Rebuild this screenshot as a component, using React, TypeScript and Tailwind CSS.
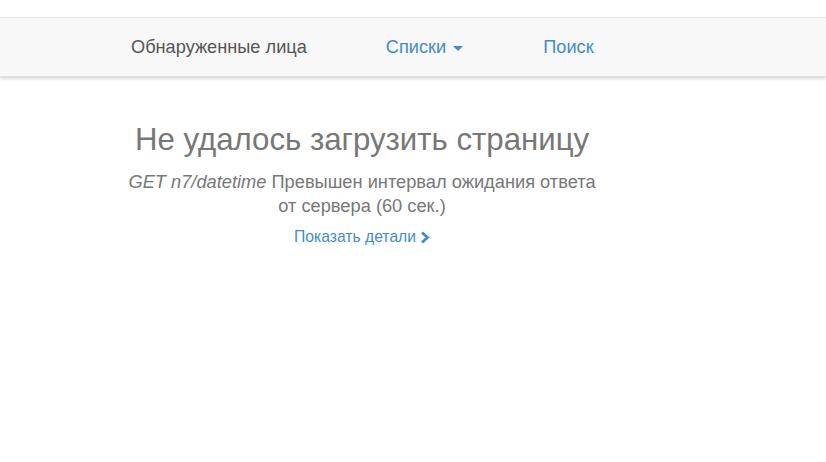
import React from "react";

export default function App() {
  return (
    <div className="min-h-[462px] bg-white" style={{ fontFamily: '"Liberation Sans", Arial, sans-serif' }}>
      <div className="h-[17px]" />
      <nav className="h-[60px] border-t border-[#e7e7e7] bg-[#f8f8f8] shadow-[0_2px_3px_rgba(0,0,0,0.15)] border-b border-b-[#e0e0e0]">
        <div className="flex h-full items-center pl-[131px] pt-[1px] text-[18.2px]">
          <span className="text-[#555]">Обнаруженные лица</span>
          <span className="ml-[79px] flex items-center text-[#428bca]">
            Списки
            <span className="ml-[7px] mt-[2px] h-0 w-0 border-x-[5px] border-t-[5px] border-x-transparent border-t-[#428bca]" />
          </span>
          <span className="ml-[80px] text-[#428bca]">Поиск</span>
        </div>
      </nav>
      <div className="w-[480px] ml-[122px] text-center text-[#777]">
        <h2 className="mt-[43px] text-[31.2px] leading-[40px] text-[#777]">Не удалось загрузить страницу</h2>
        <p className="mt-[10px] text-[18.25px] leading-[24px]">
          <i>GET n7/datetime</i> Превышен интервал ожидания ответа от сервера (60 сек.)
        </p>
        <div className="mt-[9px] flex items-center justify-center text-[15.7px] leading-[20px] text-[#428bca]">
          Показать детали
          <svg className="ml-[4px]" width="10" height="13" viewBox="0 0 10 13">
            <path d="M2 1.5 L7.5 6.5 L2 11.5" fill="none" stroke="#428bca" strokeWidth="2.8" />
          </svg>
        </div>
      </div>
    </div>
  );
}
